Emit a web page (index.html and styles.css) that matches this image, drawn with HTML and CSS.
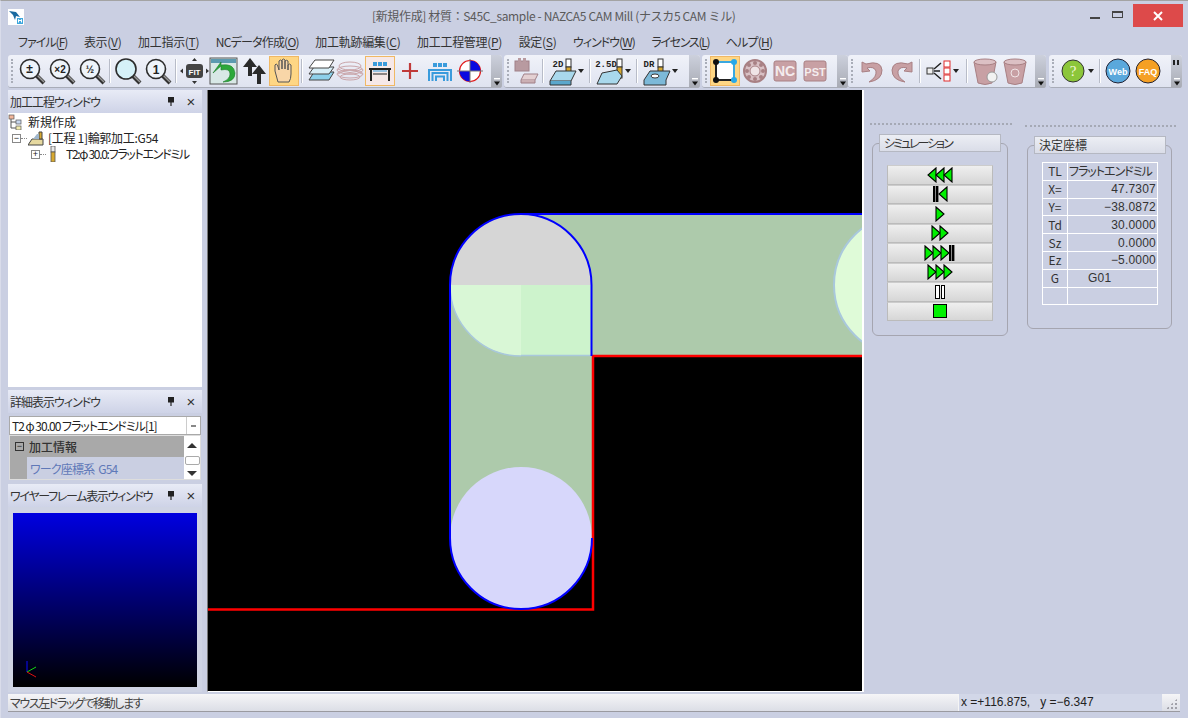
FILE: index.html
```html
<!DOCTYPE html>
<html lang="ja">
<head>
<meta charset="utf-8">
<title>NAZCA5 CAM Mill</title>
<link rel="stylesheet" href="styles.css">
</head>
<body>
<svg class="defs" width="0" height="0">
  <defs>
    <symbol id="mag" viewBox="0 0 30 30"><path d="M19 19L27 27" stroke="#333" stroke-width="4"/><path d="M20 19L27 26" stroke="#999" stroke-width="1.5"/><circle cx="13" cy="13" r="9.5" fill="#eef4fa" stroke="#2c2c2c" stroke-width="1.6"/></symbol>
    <symbol id="mag-blue" viewBox="0 0 30 30"><path d="M19 19L27 27" stroke="#333" stroke-width="4"/><path d="M20 19L27 26" stroke="#999" stroke-width="1.5"/><circle cx="13" cy="13" r="10" fill="#d5f1f8" stroke="#2c2c2c" stroke-width="1.6"/></symbol>
    <symbol id="layers" viewBox="0 0 30 30"><path d="M4 24L9 16H29L24 24Z" fill="#8dd0ea" stroke="#444"/><path d="M4 18L9 11H29L24 18Z" fill="#d7eef7" stroke="#444"/><path d="M4 12L10 4H29L24 12Z" fill="#fff" stroke="#444"/></symbol>
    <symbol id="waves" viewBox="0 0 30 30" fill="none" stroke="#c9a4a8"><ellipse cx="15" cy="10" rx="11" ry="4"/><ellipse cx="15" cy="14" rx="13" ry="4"/><ellipse cx="15" cy="18" rx="13" ry="4"/><ellipse cx="15" cy="21" rx="10" ry="3"/><path d="M3 13Q15 20 27 13M3 18Q15 10 27 18"/></symbol>
    <symbol id="rosebox" viewBox="0 0 30 30"><rect x="4" y="5" width="22" height="20" rx="2" fill="#c8a0a4" stroke="#a88084"/></symbol>
    <symbol id="trash" viewBox="0 0 30 30"><path d="M4 6L8 27Q15 30 22 27L26 6Z" fill="#c8a0a4" stroke="#a88084"/><ellipse cx="15" cy="6" rx="11" ry="3" fill="#dcc0c4" stroke="#a88084"/></symbol>
    <symbol id="drop" viewBox="0 0 6 4"><path d="M0 0H6L3 4Z" fill="#222"/></symbol>
    <symbol id="capmark" viewBox="0 0 8 8"><path d="M1 0H7V1.4H1Z" fill="#fff"/><path d="M1 3.5H7L4 7.5Z" fill="#111"/></symbol>
    <symbol id="tri" viewBox="0 0 10 16"><path d="M1 1L9 8L1 15Z" fill="#00f000" stroke="#000" stroke-width="1.1"/></symbol>
    <symbol id="tril" viewBox="0 0 10 16"><path d="M9 1L1 8L9 15Z" fill="#00f000" stroke="#000" stroke-width="1.1"/></symbol>
    <symbol id="bar" viewBox="0 0 3 16"><rect width="2.4" height="16" fill="#000"/></symbol>
  </defs>
</svg>

<div class="window">
  <header class="titlebar">
    <svg class="appicon" viewBox="0 0 16 16"><rect width="16" height="16" fill="#fff"/><path d="M1 2L8 3L12 8L8 7L7 11L5 6Z" fill="#1a6aa0"/><rect x="9" y="9" width="6" height="6" fill="#3fa7dd"/><path d="M10.500 13.500V10.500L12 12L13.500 10.500V13.500" stroke="#fff" fill="none"/></svg>
    <div class="title">[新規作成] 材質：S45C_sample - NAZCA5 CAM Mill (ナスカ5 CAM ミル)</div>
    <div class="winctl">
      <span class="ctl"><i class="min"></i></span>
      <span class="ctl"><i class="max"></i></span>
      <span class="close"><svg width="12" height="12" viewBox="0 0 12 12"><path d="M2 2L10 10M10 2L2 10" stroke="#fff" stroke-width="2"/></svg></span>
    </div>
  </header>

  <nav class="menubar">
    <span class="k1">ファイル(<u>F</u>)</span><span class="k3">表示(<u>V</u>)</span><span class="k3">加工指示(<u>T</u>)</span><span class="k2">NCデータ作成(<u>O</u>)</span><span class="k3">加工軌跡編集(<u>C</u>)</span><span class="k3">加工工程管理(<u>P</u>)</span><span class="k3">設定(<u>S</u>)</span><span class="k1">ウィンドウ(<u>W</u>)</span><span class="k1b">ライセンス(<u>L</u>)</span><span class="k2">ヘルプ(<u>H</u>)</span>
  </nav>

  <div class="toolbars">
    <div class="tbar tb1">
      <i class="grip"></i>
      <svg class="ico"><use href="#mag"/><text x="12.500" y="17" class="mt">±</text></svg>
      <svg class="ico"><use href="#mag"/><text x="13" y="17" class="ms">×2</text></svg>
      <svg class="ico"><use href="#mag"/><text x="13" y="17" class="ms">½</text></svg>
      <i class="sep"></i>
      <svg class="ico"><use href="#mag-blue"/></svg>
      <svg class="ico"><use href="#mag"/><text x="13" y="18" class="mt">1</text></svg>
      <i class="sep"></i>
      <svg class="ico" viewBox="0 0 30 30"><rect x="7" y="8" width="17" height="14" rx="3" fill="#444"/><text x="15.500" y="18.500" class="fit">FIT</text><path d="M15.500 2L18 5H13ZM15.500 28L18 25H13ZM1 15L4 12.500V17.500ZM30 15L27 12.500V17.500Z" fill="#333"/></svg>
      <svg class="ico" viewBox="0 0 30 30"><rect x="1" y="2" width="27" height="26" fill="#d8e8e6" stroke="#555"/><rect x="2" y="3" width="25" height="4" fill="#5c9ab0"/><path d="M4 17L12 10V14Q21 12 21 18Q21 23 14 26Q26 26 26 17Q25 7 12 9V6Z" fill="#2ca83a" stroke="#1e7a2c" stroke-width=".6"/></svg>
      <svg class="ico" viewBox="0 0 30 30"><path d="M11 2L4 11H9V20H13V11H18ZM20 9L13 18H18V28H22V18H27Z" fill="#2a2a2a"/></svg>
      <span class="hot amber"><svg class="ico" viewBox="0 0 30 30"><path d="M9 26L6 15V9Q7 7 8.500 9L10 14V5Q11.500 3 13 5V13V4Q14.500 2 16 4V13V5Q17.500 3.500 19 5V14V9Q20.500 7 22 9V18Q22 23 20 26Z" fill="#f8d6a8" stroke="#555"/></svg></span>
      <i class="sep"></i>
      <svg class="ico"><use href="#layers"/></svg>
      <svg class="ico"><use href="#waves"/></svg>
      <span class="hot pale"><svg class="ico" viewBox="0 0 30 30"><path d="M8 6h4v4H8zM13 6h4v4h-4zM18 6h4v4h-4z" fill="#3a9bdc"/><path d="M4 13H26M6 13V25M24 13V25" stroke="#222" stroke-width="2"/><path d="M8 15H22" stroke="#3a9bdc"/><path d="M8 18H22" stroke="#222"/></svg></span>
      <svg class="ico" viewBox="0 0 30 30"><path d="M15 7V23M7 15H23" stroke="#c03a3a" stroke-width="2.200"/></svg>
      <svg class="ico" viewBox="0 0 30 30"><path d="M8 7h4v4H8zM13 7h4v4h-4zM18 7h4v4h-4z" fill="#3a9bdc"/><path d="M4 25V14H26V25M7.500 25V17H22.500V25M11 25V20.500H19V25" stroke="#3a9bdc" stroke-width="2" fill="none"/></svg>
      <svg class="ico" viewBox="0 0 30 30"><circle cx="15" cy="15" r="10.500" fill="#fff" stroke="#e01818" stroke-width="1.200"/><path d="M15 15V4.500A10.500 10.500 0 0 1 25.500 15ZM15 15V25.500A10.500 10.500 0 0 1 4.500 15Z" fill="#0a0ae0"/><path d="M2 15H28M15 3V27" stroke="#777"/></svg>
      <span class="cap"><svg viewBox="0 0 8 8"><use href="#capmark"/></svg></span>
    </div>

    <div class="tbar tb2">
      <i class="grip"></i>
      <svg class="ico" viewBox="0 0 30 30"><rect x="5" y="5" width="14" height="10" fill="#b89aa0" stroke="#a08088"/><rect x="8" y="2" width="3" height="4" fill="#b89aa0"/><rect x="13" y="2" width="3" height="4" fill="#b89aa0"/><path d="M11 24L14 18H28L25 24Z" fill="#e4d0d2" stroke="#a08088"/><path d="M11 24V27H25V24" fill="#cbb0b4" stroke="#a08088"/></svg>
      <i class="sep"></i>
      <span class="drop"><svg class="ico" viewBox="0 0 30 30"><text x="10" y="11" class="tag">2D</text><rect x="18" y="3" width="5" height="8" fill="#fff" stroke="#333"/><rect x="18" y="11" width="5" height="11" fill="#d8a92f" stroke="#333"/><path d="M2 25L8 15H28L23 25Z" fill="#a9d8ec" stroke="#333"/><path d="M23 25V29H2V25" fill="#5ba7cc" stroke="#333"/></svg><svg class="arrow"><use href="#drop"/></svg></span>
      <i class="sep"></i>
      <span class="drop"><svg class="ico" viewBox="0 0 30 30"><text x="11" y="11" class="tag">2.5D</text><rect x="22" y="3" width="5" height="8" fill="#fff" stroke="#333"/><rect x="22" y="11" width="5" height="11" fill="#d8a92f" stroke="#333"/><path d="M2 28L7 17L22 14L27 20L22 28Z" fill="#a9d8ec" stroke="#333"/></svg><svg class="arrow"><use href="#drop"/></svg></span>
      <i class="sep"></i>
      <span class="drop"><svg class="ico" viewBox="0 0 30 30"><text x="7" y="11" class="tag">DR</text><rect x="16" y="3" width="5" height="8" fill="#fff" stroke="#333"/><rect x="16" y="11" width="5" height="11" fill="#d8a92f" stroke="#333"/><path d="M2 24L8 15H28L24 24V29H2Z" fill="#7cb9d8" stroke="#333"/><ellipse cx="13" cy="20" rx="4" ry="2" fill="#fff" stroke="#333"/></svg><svg class="arrow"><use href="#drop"/></svg></span>
      <span class="cap"><svg viewBox="0 0 8 8"><use href="#capmark"/></svg></span>
    </div>

    <div class="tbar tb3">
      <i class="grip"></i>
      <span class="hot amber"><svg class="ico" viewBox="0 0 30 30"><rect x="6" y="6" width="18" height="18" fill="#fff" stroke="#222" stroke-width="2"/><path d="M6 6H24" stroke="#3aa8e0" stroke-width="2"/><path d="M24 6V24" stroke="#3aa8e0" stroke-width="2"/><circle cx="6" cy="6" r="3" fill="#111"/><circle cx="6" cy="24" r="3" fill="#111"/><circle cx="24" cy="6" r="3" fill="#28a8e8"/><circle cx="24" cy="24" r="3" fill="#28a8e8"/></svg></span>
      <svg class="ico" viewBox="0 0 30 30"><circle cx="15" cy="15" r="11" fill="#d8c0c4" stroke="#a88084" stroke-width="2"/><circle cx="15" cy="15" r="5" fill="#efe4e6" stroke="#a88084"/><circle cx="15" cy="7" r="2" fill="#a88084"/><circle cx="15" cy="23" r="2" fill="#a88084"/><circle cx="7" cy="15" r="2" fill="#a88084"/><circle cx="23" cy="15" r="2" fill="#a88084"/><circle cx="9" cy="9" r="2" fill="#a88084"/><circle cx="21" cy="9" r="2" fill="#a88084"/><circle cx="9" cy="21" r="2" fill="#a88084"/><circle cx="21" cy="21" r="2" fill="#a88084"/></svg>
      <svg class="ico" viewBox="0 0 30 30"><use href="#rosebox"/><text x="15" y="20" class="rosetxt">NC</text></svg>
      <svg class="ico" viewBox="0 0 30 30"><use href="#rosebox"/><text x="15" y="19.500" class="rosetxt small">PST</text></svg>
      <span class="cap"><svg viewBox="0 0 8 8"><use href="#capmark"/></svg></span>
    </div>

    <div class="tbar tb4">
      <i class="grip"></i>
      <svg class="ico" viewBox="0 0 30 30"><path d="M5 6V16L13 15L10 12Q17 10 19 15Q20 21 12 26Q25 24 25 14Q24 4 9 8Z" fill="#c8a0a4" stroke="#a88084"/></svg>
      <svg class="ico" viewBox="0 0 30 30"><path d="M25 6V16L17 15L20 12Q13 10 11 15Q10 21 18 26Q5 24 5 14Q6 4 21 8Z" fill="#c8a0a4" stroke="#a88084"/></svg>
      <i class="sep"></i>
      <span class="drop"><svg class="ico" viewBox="0 0 30 30"><rect x="4" y="12" width="6" height="6" fill="#eee" stroke="#333"/><path d="M11 15H17M11 13L18 7M11 17L18 23" stroke="#222" stroke-width="1.500"/><rect x="21" y="5" width="6" height="6" fill="#fff" stroke="#e02c2c"/><rect x="21" y="12" width="6" height="6" fill="#fff" stroke="#e02c2c"/><rect x="21" y="19" width="6" height="6" fill="#fff" stroke="#e02c2c"/></svg><svg class="arrow"><use href="#drop"/></svg></span>
      <i class="sep"></i>
      <svg class="ico" viewBox="0 0 30 30"><use href="#trash"/><circle cx="22" cy="21" r="5" fill="#f2f2f2" stroke="#999"/></svg>
      <svg class="ico" viewBox="0 0 30 30"><use href="#trash"/><circle cx="15" cy="17" r="4" fill="none" stroke="#f0e4e6"/></svg>
      <span class="cap"><svg viewBox="0 0 8 8"><use href="#capmark"/></svg></span>
    </div>

    <div class="tbar tb5">
      <i class="grip"></i>
      <span class="drop"><svg class="ico" viewBox="0 0 30 30"><circle cx="15" cy="15" r="11" fill="#8cc63a" stroke="#333"/><text x="15" y="20" class="ball q">?</text></svg><svg class="arrow"><use href="#drop"/></svg></span>
      <i class="sep"></i>
      <svg class="ico" viewBox="0 0 30 30"><circle cx="15" cy="15" r="12" fill="#5aa8dc" stroke="#223"/><text x="15" y="18.500" class="ball">Web</text></svg>
      <svg class="ico" viewBox="0 0 30 30"><circle cx="15" cy="15" r="12" fill="#f5a024" stroke="#223"/><text x="15" y="18.500" class="ball">FAQ</text></svg>
      <span class="cap endcap"><i class="chev"></i><svg viewBox="0 0 8 8"><use href="#capmark"/></svg></span>
    </div>
  </div>

  <main class="main">
    <aside class="sidebar">
      <section class="panel tree-panel">
        <div class="panelhead"><span class="k1">加工工程ウィンドウ</span><span class="pin"></span><span class="x">×</span></div>
        <div class="tree">
          <div class="node"><svg class="nodeicon" viewBox="0 0 16 16"><rect x="1" y="1" width="5" height="4" fill="#f2b69a" stroke="#555" stroke-width=".7"/><rect x="8" y="6" width="5" height="4" fill="#c8d8f0" stroke="#555" stroke-width=".7"/><rect x="8" y="12" width="5" height="4" fill="#f2ecb0" stroke="#555" stroke-width=".7"/><path d="M3 5V14H8M3 8H8" stroke="#555" fill="none"/></svg>新規作成</div>
          <div class="node lv1"><i class="box">−</i><i class="dots"></i><svg class="nodeicon" viewBox="0 0 16 16"><path d="M0 15L4 9H15V15Z" fill="#e6d9a0" stroke="#444"/><path d="M11 2H14V9H11Z" fill="#d8a92f" stroke="#444"/><path d="M5 9L9 4H11V9Z" fill="#9fb6cc"/></svg><span class="k3">[工程 1]輪郭加工:G54</span></div>
          <div class="node lv2"><i class="box">+</i><i class="dots"></i><svg class="toolicon" viewBox="0 0 6 16"><rect x="1" y="0" width="4" height="6" fill="#e8e8e8" stroke="#555" stroke-width=".8"/><rect x="1" y="6" width="4" height="10" fill="#d8a92f" stroke="#555" stroke-width=".8"/></svg><span class="k1b">T2:φ 30.0:フラットエンドミル</span></div>
        </div>
      </section>

      <section class="panel detail-panel">
        <div class="panelhead"><span class="k1">詳細表示ウィンドウ</span><span class="pin"></span><span class="x">×</span></div>
        <div class="combo"><span class="k1">T2 φ 30.00 フラットエンドミル[1]</span><i class="combobtn"></i></div>
        <div class="prop">
          <div class="proplist">
            <div class="propcat"><i class="box dark">−</i>加工情報</div>
            <div class="proprow"><span class="k2">ワーク座標系&nbsp; G54</span></div>
          </div>
          <div class="scroll"><i class="up"></i><i class="thumb"></i><i class="down"></i></div>
        </div>
      </section>

      <section class="panel wire-panel">
        <div class="panelhead"><span class="k4">ワイヤーフレーム表示ウィンドウ</span><span class="pin"></span><span class="x">×</span></div>
        <div class="wirebody">
          <div class="wire">
            <svg class="axes" viewBox="0 0 12 18"><path d="M1 0V11" stroke="#0a0aff"/><path d="M1 11L10 6" stroke="#12d812"/><path d="M1 11L10 16" stroke="#e01010"/></svg>
          </div>
        </div>
      </section>
    </aside>

    <div class="viewport">
      <svg class="canvas" viewBox="208 90 654 601">
        <rect x="208" y="90" width="654" height="601" fill="#000"/>
        <path d="M862 214H521A71 71 0 0 0 450 285V538H592V356H862Z" fill="#adcaab"/>
        <circle cx="905" cy="285" r="71" fill="#dffbd8" stroke="#a9c8dc" stroke-width="2"/>
        <path d="M450 285A71 71 0 0 0 521 356V285Z" fill="#d9f7d6"/>
        <path d="M450 285A71 71 0 0 0 521 356" fill="none" stroke="#a9c8dc" stroke-width="1.500"/>
        <rect x="521" y="285" width="71" height="71" fill="#cdf3cc"/>
        <path d="M521 355.500H592" stroke="#a9c8dc" stroke-width="1.500"/>
        <path d="M450 285A71 71 0 0 1 592 285Z" fill="#d6d6d6"/>
        <circle cx="521" cy="538" r="71" fill="#d7d7fb"/>
        <path d="M862 356H593V609.500H208" fill="none" stroke="#f00" stroke-width="2.500"/>
        <path d="M862 214H521A71 71 0 0 0 450 285V538A71 71 0 0 0 592 538" fill="none" stroke="#00f" stroke-width="2"/>
        <path d="M591.500 285A71 71 0 0 0 521 214M591.500 285V356" fill="none" stroke="#00f" stroke-width="2"/>
      </svg>
    </div>

    <div class="sidepanels">
      <section class="dock dock-sim">
        <div class="dockrule"></div>
        <fieldset class="group">
          <legend><span class="k5">シミュレーション</span></legend>
          <div class="simbtns">
            <button><svg class="t"><use href="#tril"/></svg><svg class="t"><use href="#tril"/></svg><svg class="t"><use href="#tril"/></svg></button>
            <button><svg class="b"><use href="#bar"/></svg><svg class="b"><use href="#bar"/></svg><svg class="t"><use href="#tril"/></svg></button>
            <button><svg class="t"><use href="#tri"/></svg></button>
            <button><svg class="t"><use href="#tri"/></svg><svg class="t"><use href="#tri"/></svg></button>
            <button><svg class="t"><use href="#tri"/></svg><svg class="t"><use href="#tri"/></svg><svg class="t"><use href="#tri"/></svg><svg class="b"><use href="#bar"/></svg><svg class="b"><use href="#bar"/></svg></button>
            <button><svg class="t"><use href="#tri"/></svg><svg class="t"><use href="#tri"/></svg><svg class="t"><use href="#tri"/></svg></button>
            <button><i class="pausebar"></i><i class="pausebar"></i></button>
            <button><i class="stop"></i></button>
          </div>
        </fieldset>
      </section>
      <section class="dock dock-coord">
        <div class="dockrule"></div>
        <fieldset class="group">
          <legend>決定座標</legend>
          <table class="coords">
            <tr><th>TL</th><td class="l">フラットエンドミル</td></tr>
            <tr><th>X=</th><td>47.7307</td></tr>
            <tr><th>Y=</th><td>−38.0872</td></tr>
            <tr><th>Td</th><td>30.0000</td></tr>
            <tr><th>Sz</th><td>0.0000</td></tr>
            <tr><th>Ez</th><td>−5.0000</td></tr>
            <tr><th>G</th><td class="g">G01</td></tr>
            <tr><th>&nbsp;</th><td>&nbsp;</td></tr>
          </table>
        </fieldset>
      </section>
    </div>
  </main>

  <footer class="status">
    <span class="msg">マウス左ドラッグで移動します</span>
    <span class="pos">x =+116.875,&nbsp;&nbsp; y =−6.347</span>
    <span class="sizegrip"></span>
  </footer>
</div>
</body>
</html>
```
FILE: styles.css
```css
* { box-sizing: border-box; }
html, body { margin: 0; padding: 0; height: 100%; overflow: hidden; }
body { background: #cacfe2; font-family: "Noto Sans CJK JP", "Noto Sans", sans-serif; font-size: 12px; color: #333; font-feature-settings: "palt"; }
.defs { position: absolute; }
i { display: block; font-style: normal; }
.k1 { letter-spacing: -1px; }
.k1b { letter-spacing: -1.300px; }
.k2 { letter-spacing: -.8px; }
.k3 { letter-spacing: -.3px; }
.k4 { letter-spacing: -1.300px; }
.k5 { letter-spacing: -2px; }
.window { width: 1188px; height: 718px; display: flex; flex-direction: column; border-top: 1px solid #a3a3a3; border-left: 1px solid #d9dcea; }

.titlebar { height: 27px; display: flex; align-items: center; position: relative; flex: none; }
.appicon { width: 16px; height: 16px; margin-left: 7px; margin-top: 5px; }
.title { position: absolute; left: 371px; top: 6px; color: #5a5a5a; font-size: 12px; line-height: 17px; white-space: nowrap; font-feature-settings: normal; letter-spacing: -.35px; }
.winctl { margin-left: auto; margin-right: 5px; display: flex; align-self: flex-start; margin-top: 3px; align-items: flex-start; }
.ctl { width: 22px; height: 20px; display: flex; align-items: center; justify-content: center; }
.min { width: 10px; height: 2px; background: #444; margin-top: 7px; }
.max { width: 11px; height: 7px; border: 1px solid #444; border-top-width: 2px; }
.close { width: 50px; height: 23px; background: #dd4a4a; display: flex; align-items: center; justify-content: center; margin-left: 5px; }

.menubar { height: 26px; flex: none; display: flex; gap: 16.600px; padding-left: 17px; align-items: center; color: #333; font-size: 12px; white-space: nowrap; }
.menubar u { text-underline-offset: 2px; }

.toolbars { height: 34px; margin-top: 1px; flex: none; display: flex; padding-left: 7px; }
.tbar { height: 33px; display: flex; align-items: center; background: linear-gradient(#f0f2f9, #dfe3f0); border-radius: 3px; border-bottom: 1px solid #a8acb8; position: relative; flex: none; }
.tb1 { width: 494px; }
.tb2 { width: 196px; margin-left: 2px; }
.tb3 { width: 146px; margin-left: 2px; }
.tb4 { width: 198px; }
.tb5 { width: 133px; margin-left: 3px; }
.grip { width: 2px; height: 24px; margin: 0 5px 0 3px; border-left: 2px dotted #a9adb8; flex: none; }
.tb1 .grip, .tb4 .grip, .tb5 .grip { margin-right: 4px; }
.tb2 .grip { margin-right: 1px; }
.tb3 .grip { margin-right: 3px; }
.sep { width: 2px; height: 24px; margin: 0 2px; background: #fff; border-left: 1px solid #b8bcc8; flex: none; }
.ico { width: 30px; height: 30px; flex: none; display: block; }
.hot { width: 30px; height: 30px; display: block; flex: none; }
.hot.amber { background: #fed684; outline: 1px solid #f0b864; outline-offset: -1px; }
.hot.pale { background: #f6e8e8; outline: 1px solid #f0b864; outline-offset: -1px; }
.drop { display: flex; align-items: center; width: 41px; flex: none; }
.tb2 .drop { padding-left: 2px; }
.tb5 .drop { width: 39px; }
.arrow { width: 6px; height: 4px; flex: none; }
.cap { position: absolute; right: 0; top: 0; bottom: -1px; width: 11px; background: linear-gradient(#ccd0dc, #a8abb4); border-radius: 0 3px 3px 0; display: flex; align-items: flex-end; justify-content: center; padding-bottom: 2px; }
.cap svg { width: 8px; height: 8px; }
.chev { position: absolute; top: 5px; left: 2px; width: 7px; height: 5px; background: linear-gradient(90deg, #222 0 2px, transparent 2px 4px, #222 4px 6px, transparent 6px); }

.mt { font: 700 12px "Liberation Sans", sans-serif; fill: #222; text-anchor: middle; }
.ms { font: 700 10px "Liberation Sans", sans-serif; fill: #222; text-anchor: middle; }
.fit { font: 700 8px "Liberation Sans", sans-serif; fill: #fff; text-anchor: middle; }
.tag { font: 700 9px "Liberation Mono", monospace; fill: #222; text-anchor: middle; }
.rosetxt { font: 700 14px "Liberation Sans", sans-serif; fill: #f4ecee; text-anchor: middle; }
.rosetxt.small { font-size: 11px; }
.ball { font: 700 9px "Liberation Sans", sans-serif; fill: #fff; text-anchor: middle; }
.ball.q { font: 400 15px "Liberation Serif", serif; fill: #f4f8d8; }

.main { flex: none; height: 602px; margin-top: 1px; display: flex; }
.sidebar { width: 194px; margin-left: 7px; display: flex; flex-direction: column; flex: none; }
.panel { display: flex; flex-direction: column; }
.tree-panel { height: 297px; }
.detail-panel { height: 90px; margin-top: 3px; }
.wire-panel { flex: 1; margin-top: 4px; }
.panelhead { height: 23px; flex: none; display: flex; align-items: center; padding: 0 6px 0 2px; background: linear-gradient(#e8ebf6, #ced3e7); font-size: 12px; color: #333; white-space: nowrap; }
.panelhead span:first-child { flex: 1; }
.pin { width: 6px; height: 9px; background: #222; margin-right: 12px; clip-path: polygon(0 0, 100% 0, 100% 60%, 60% 60%, 60% 100%, 40% 100%, 40% 60%, 0 60%); }
.x { width: 10px; font-size: 15px; color: #333; line-height: 16px; text-align: center; font-family: "Liberation Sans", sans-serif; }
.tree { flex: 1; background: #fff; color: #222; padding-top: 1px; }
.node { height: 16px; display: flex; align-items: center; white-space: nowrap; font-size: 12px; line-height: 16px; }
.nodeicon { width: 16px; height: 16px; margin-right: 4px; flex: none; }
.toolicon { width: 6px; height: 16px; margin: 0 10px 0 3px; flex: none; }
.lv1 { padding-left: 4px; }
.lv2 { padding-left: 23px; }
.box { width: 9px; height: 9px; border: 1px solid #888; background: #fff; font-size: 9px; line-height: 7px; text-align: center; color: #222; flex: none; font-family: "Liberation Sans", sans-serif; }
.dots { width: 6px; border-top: 1px dotted #888; flex: none; margin-right: 1px; }
.combo { height: 19px; margin: 3px 1px 0; display: flex; align-items: center; background: #fff; border: 1px solid #a9a9a9; padding-left: 2px; color: #222; white-space: nowrap; }
.combo span { flex: 1; }
.combobtn { width: 14px; height: 100%; border-left: 1px solid #ccc; position: relative; }
.combobtn::after { content: ""; position: absolute; left: 4px; top: 8px; width: 5px; height: 2px; background: #888; }
.prop { height: 45px; margin: 0 1px; display: flex; background: #a9a9a9; border: 1px solid #ddd; }
.proplist { flex: 1; }
.propcat { height: 21px; display: flex; align-items: center; gap: 5px; padding-left: 5px; color: #333; background: #a9a9a9; font-size: 12px; font-weight: 500; }
.box.dark { background: transparent; border-color: #333; }
.proprow { height: 22px; margin-left: 17px; background: #cacfe2; color: #5f78b8; display: flex; align-items: center; padding-left: 3px; }
.scroll { width: 16px; background: #fff; display: flex; flex-direction: column; align-items: center; padding-top: 7px; }
.up { width: 0; height: 0; border: 5px solid transparent; border-top: 0; border-bottom: 5px solid #333; }
.down { width: 0; height: 0; border: 5px solid transparent; border-bottom: 0; border-top: 5px solid #333; margin-top: 6px; }
.thumb { width: 15px; height: 9px; border: 1px solid #aaa; border-radius: 2px; margin-top: 8px; background: #fff; }
.wirebody { flex: 1; padding: 6px 5px 4px; background: #cfd4e4; }
.wire { height: 174px; background: linear-gradient(#0000e0, #000); position: relative; }
.axes { position: absolute; left: 13px; bottom: 8px; width: 12px; height: 18px; }

.viewport { width: 657px; margin-left: 5px; flex: none; border-left: 1px solid #777; border-right: 2px solid #fff; border-bottom: 1px solid #fff; }
.canvas { display: block; width: 654px; height: 601px; }

.sidepanels { flex: 1; display: flex; padding-top: 33px; padding-left: 6px; gap: 13px; }
.dock { flex: none; }
.dock-sim { width: 142px; }
.dock-coord { width: 151px; padding-top: 2px; }
.dockrule { height: 0; border-top: 2px dotted #a5a9b5; }
.group { margin: 9px 4px 0 2px; padding: 0; border: 1px solid #a5a5b0; border-radius: 6px; position: relative; }
.dock-sim .group { height: 202px; width: 136px; }
.dock-coord .group { margin-top: 9px; height: 193px; width: 145px; margin-left: 2px; }
legend { height: 18px; width: 122px; margin-left: 6px; padding: 0 0 0 4px; background: linear-gradient(#eceef4, #dadde8); border: 1px solid #b5b8c2; font-size: 12px; line-height: 16px; color: #333; white-space: nowrap; }
.dock-coord legend { width: 132px; }
.simbtns { display: flex; flex-direction: column; width: 106px; margin: 13px 0 0 14px; }
.simbtns button { height: 19.5px; padding: 0; display: flex; align-items: center; justify-content: center; background: linear-gradient(#efefef, #d6d6d6); border: 1px solid #bbb; border-top-color: #ccc; }
.t { width: 10px; height: 16px; flex: none; margin: 0 -1px; }
.b { width: 3px; height: 16px; flex: none; }
.pausebar { width: 4.500px; height: 14px; border: 1px solid #000; background: #fff; margin: 0 .5px; }
.stop { width: 14px; height: 14px; background: #00f000; border: 1px solid #000; }
.coords { border-collapse: collapse; margin: 8px 0 0 14px; width: 116px; table-layout: fixed; background: transparent; color: #333; font-size: 12px; font-feature-settings: normal; }
.coords th, .coords td { height: 17.800px; padding: 0 1px; line-height: 14px; border: 1px solid #fff; font-weight: 400; overflow: hidden; white-space: nowrap; }
.coords th { width: 25px; text-align: center; }
.coords td { text-align: right; font-family: "Liberation Sans", sans-serif; letter-spacing: .2px; }
.coords td.l { text-align: left; font-family: "Noto Sans CJK JP", sans-serif; font-feature-settings: "palt"; letter-spacing: -1px; }
.coords td.g { text-align: left; padding-left: 20px; }

.status { margin: 1px 0 0 7px; width: 1172px; height: 19px; flex: none; display: flex; align-items: stretch; background: linear-gradient(#f5f5f7, #dcdee6); border-bottom: 1px solid #9a9aa0; border-top: 1px solid #cacfe2; font-size: 12px; line-height: 17px; }
.msg { flex: 1; padding-left: 2px; color: #444; letter-spacing: -1.400px; }
.pos { width: 204px; background: #d2d7e8; border-left: 1px solid #f5f5f5; padding-left: 2px; font-family: "Liberation Sans", sans-serif; color: #222; white-space: nowrap; }
.sizegrip { width: 18px; position: relative; }
.sizegrip::after { content: ""; position: absolute; inset: 4px 2px 2px 4px; background: radial-gradient(circle, #a0a0a8 1px, transparent 1.200px) 0 0/4px 4px; clip-path: polygon(100% 0, 100% 100%, 0 100%); }
```
